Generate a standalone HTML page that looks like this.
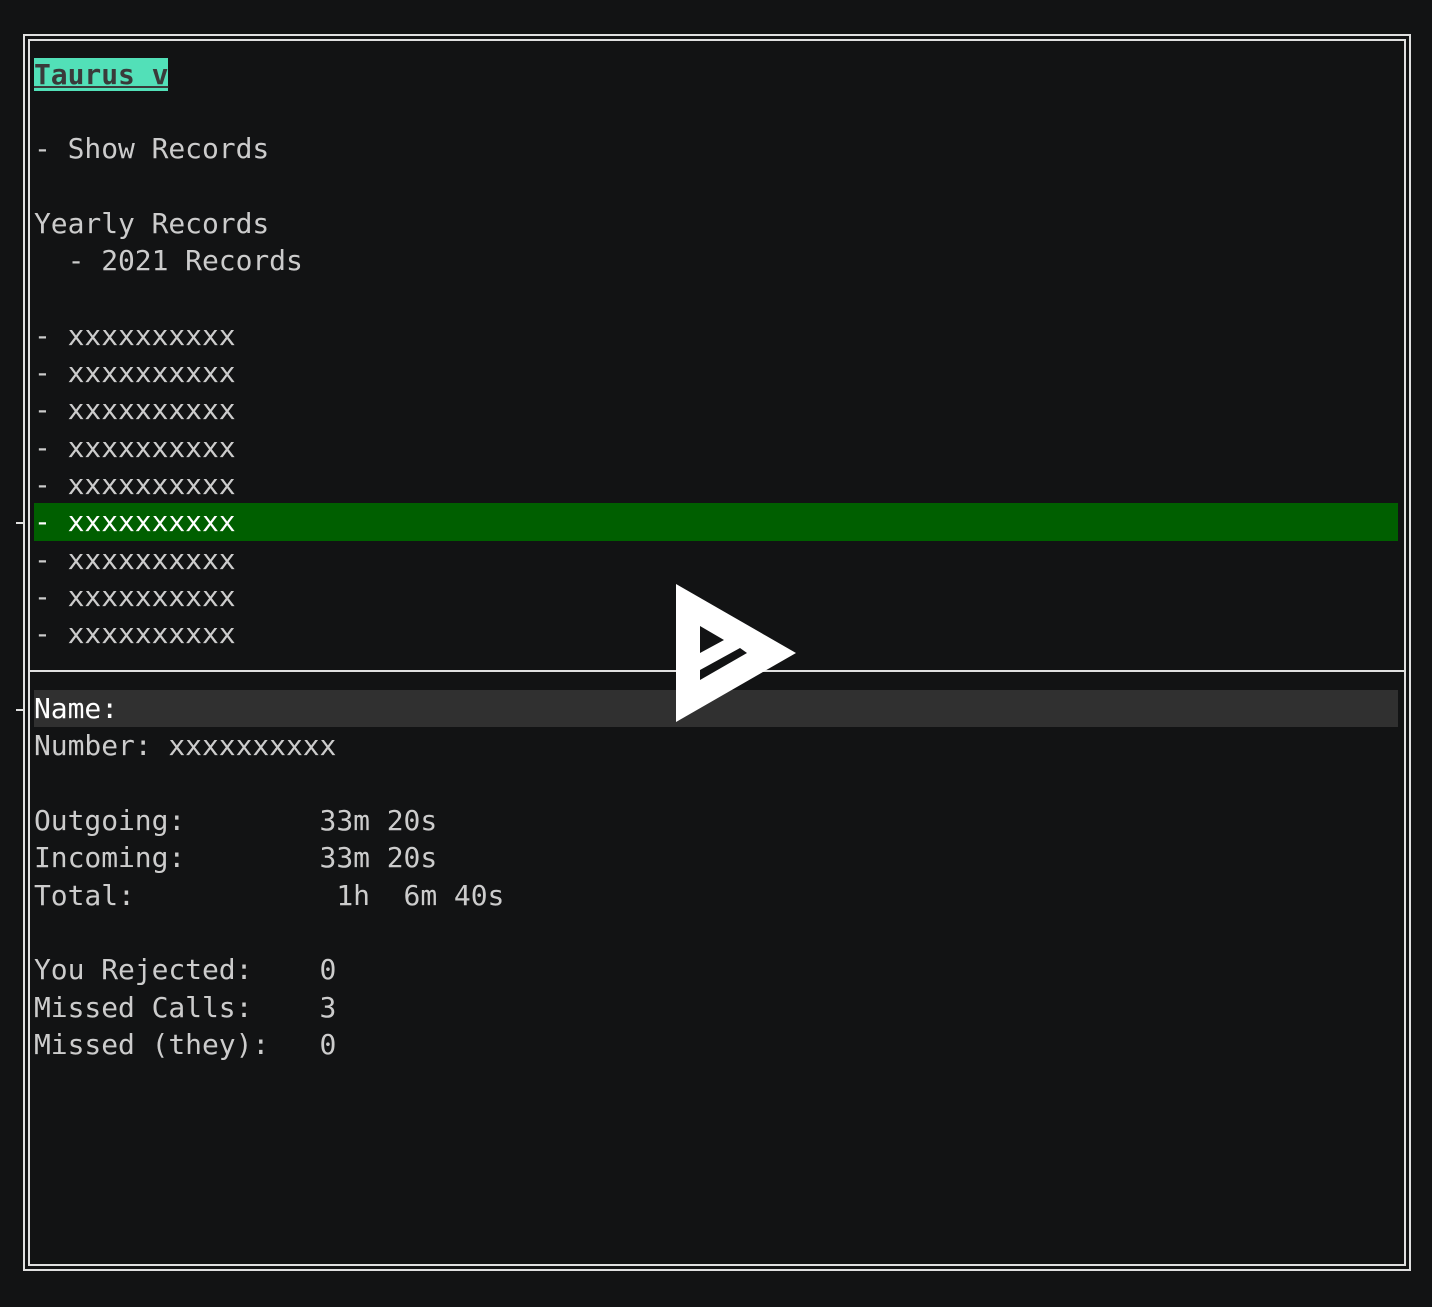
<!DOCTYPE html>
<html><head><meta charset="utf-8"><style>
html,body{margin:0;padding:0;background:#121314;width:1432px;height:1307px;overflow:hidden}
.l{position:absolute;background:#e0e0e0}
pre{position:absolute;left:34px;top:55.5px;margin:0;font-family:"DejaVu Sans Mono","Liberation Mono",monospace;font-size:28px;line-height:37.33px;color:#cccccc;letter-spacing:-0.06px}
.row{display:block;height:37.33px;white-space:pre}
.tau{background:#52e0b8;color:#3a3a3a;text-decoration:underline;font-weight:bold}
.hl{background:#005f00;color:#fff;width:1364px}
.nm{background:#303030;color:#fff;width:1364px}
</style></head><body>
<div class="l" style="left:23px;top:34px;width:1388px;height:2px"></div>
<div class="l" style="left:28px;top:39px;width:1378px;height:2px"></div>
<div class="l" style="left:23px;top:1269px;width:1388px;height:2px"></div>
<div class="l" style="left:28px;top:1264px;width:1378px;height:2px"></div>
<div class="l" style="left:23px;top:34px;width:2px;height:1237px"></div>
<div class="l" style="left:28px;top:39px;width:2px;height:1227px"></div>
<div class="l" style="left:1409px;top:34px;width:2px;height:1237px"></div>
<div class="l" style="left:1404px;top:39px;width:2px;height:1227px"></div>
<div class="l" style="left:28px;top:670px;width:1378px;height:2px"></div>
<div class="l" style="left:16px;top:522px;width:7px;height:2px"></div>
<div class="l" style="left:16px;top:709px;width:7px;height:2px"></div>
<pre><span class="row"><span class="tau">Taurus v</span></span><span class="row"> </span><span class="row">- Show Records</span><span class="row"> </span><span class="row">Yearly Records</span><span class="row">  - 2021 Records</span><span class="row"> </span><span class="row">- xxxxxxxxxx</span><span class="row">- xxxxxxxxxx</span><span class="row">- xxxxxxxxxx</span><span class="row">- xxxxxxxxxx</span><span class="row">- xxxxxxxxxx</span><span class="row hl">- xxxxxxxxxx</span><span class="row">- xxxxxxxxxx</span><span class="row">- xxxxxxxxxx</span><span class="row">- xxxxxxxxxx</span><span class="row"> </span><span class="row nm">Name:</span><span class="row">Number: xxxxxxxxxx</span><span class="row"> </span><span class="row">Outgoing:        33m 20s</span><span class="row">Incoming:        33m 20s</span><span class="row">Total:            1h  6m 40s</span><span class="row"> </span><span class="row">You Rejected:    0</span><span class="row">Missed Calls:    3</span><span class="row">Missed (they):   0</span></pre>
<svg style="position:absolute;left:0;top:0" width="1432" height="1307">
<polygon points="676,584 796,653 676,722" fill="#fff"/>
<polygon points="700,626 724,640 700,653" fill="#121314"/>
<polygon points="700,670 740,648 747,653 700,680" fill="#121314"/>
</svg>
</body></html>
